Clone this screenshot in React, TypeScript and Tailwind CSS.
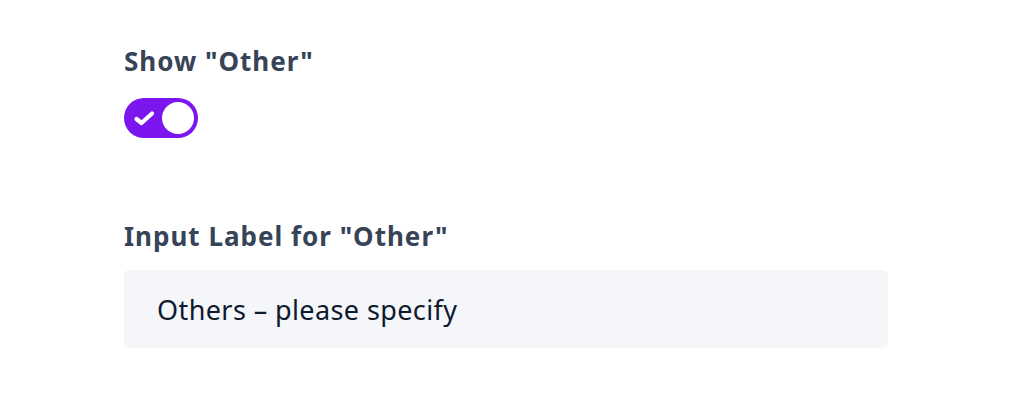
export default function App() {
    return (
        <div className="min-h-[416px] w-full bg-white pl-[124px] pt-[45px] font-['Noto_Sans',sans-serif]">
            {/* Show Other toggle */}
            <div>
                <label className="block text-[26px] leading-[32px] font-bold tracking-[1px] text-[#374357]">Show "Other"</label>
                <button
                    type="button"
                    className="mt-[21px] flex h-[40px] w-[74px] items-center justify-between rounded-full bg-[#7b16ef] pl-[9px] pr-[4px]"
                >
                    <svg width="23" height="17" viewBox="0 0 23 17" fill="none">
                        <path d="M3.5 9 L8.5 13 L19 3.5" stroke="white" strokeWidth="4.2" strokeLinecap="round" strokeLinejoin="round" />
                    </svg>
                    <span className="block h-[32px] w-[32px] rounded-full bg-white" />
                </button>
            </div>

            {/* Input label */}
            <div className="mt-[82px]">
                <label className="block text-[26px] leading-[32px] font-bold tracking-[1px] text-[#374357]">Input Label for "Other"</label>
                <input
                    type="text"
                    defaultValue="Others – please specify"
                    className="mt-[18px] block h-[78px] w-[764px] rounded-[5px] bg-[#f5f6fa] px-[33px] text-[27px] tracking-[0.4px] text-[#0e1a2e] outline-none"
                />
            </div>
        </div>
    )
}
